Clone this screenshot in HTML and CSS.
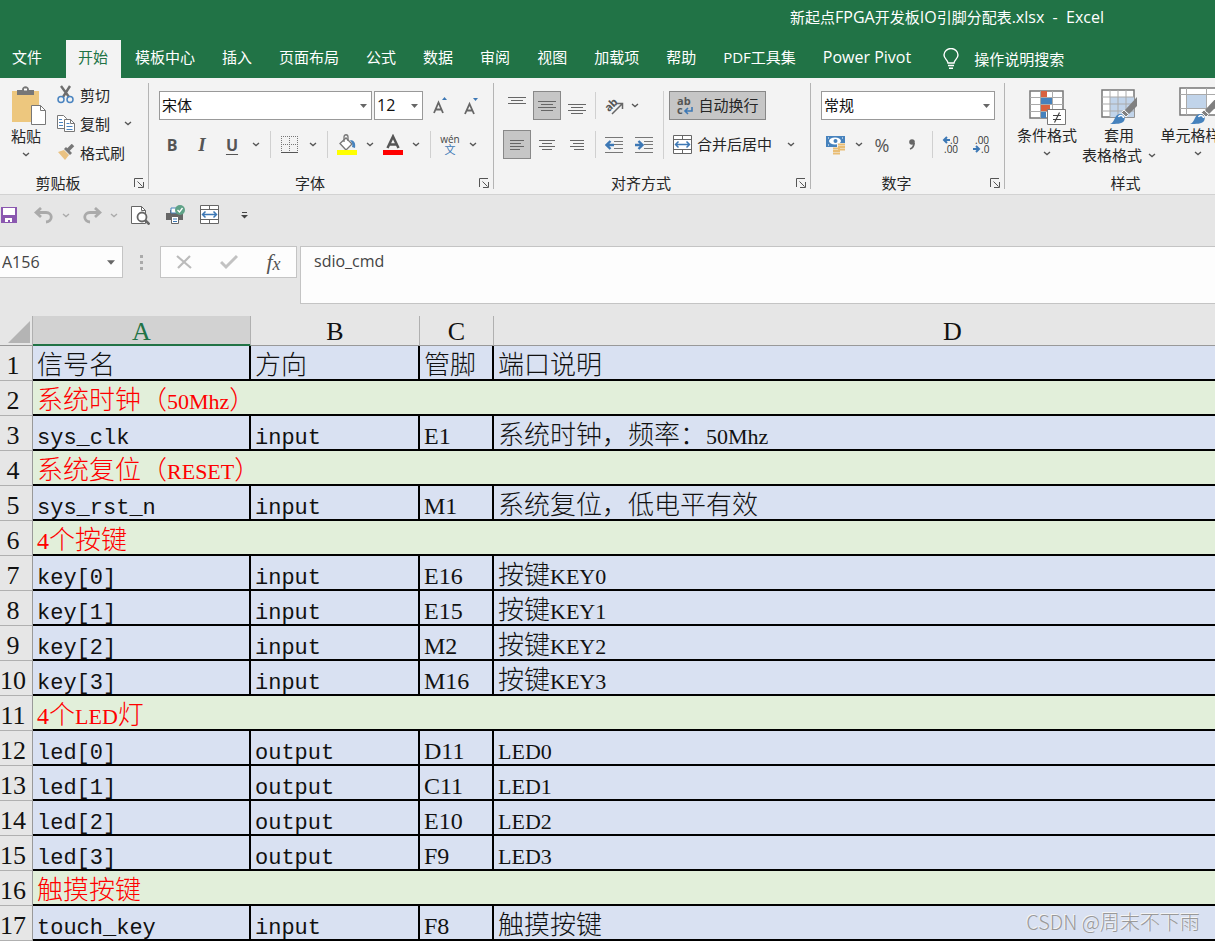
FILE: index.html
```html
<!DOCTYPE html>
<html lang="zh-CN">
<head>
<meta charset="utf-8">
<title>新起点FPGA开发板IO引脚分配表.xlsx - Excel</title>
<link rel="stylesheet" href="styles.css">
</head>
<body>
<svg class="defs" aria-hidden="true">
  <symbol id="chev" viewBox="0 0 8 5"><path d="M1 1l3 2.6L7 1" fill="none" stroke="currentColor" stroke-width="1.3"/></symbol>
  <symbol id="tri" viewBox="0 0 7 4"><path d="M0 0h7L3.500 4z" fill="currentColor"/></symbol>
  <symbol id="launch" viewBox="0 0 10 10"><path d="M.5 9V.5H9M3.500 3.500l5 5M9.500 4v5.500H4" fill="none" stroke="#555"/></symbol>
  <symbol id="merge" viewBox="0 0 20 20"><path d="M.5.5h18v18H.5zM.5 4.500h18M.5 14.500h18M9.500.5v4M9.500 14.500v4" fill="#fff" stroke="#666"/><path d="M3 9.500h13M5.500 6.500l-3 3 3 3M13.500 6.500l3 3-3 3" fill="none" stroke="#3d78b5" stroke-width="1.500"/></symbol>
  <symbol id="brush" viewBox="0 0 28 28"><path d="M27 0v9l-8 8-4-4z" fill="#808080"/><path d="M14 13l4.500 4.500-2.500 2.500-4.500-4.500z" fill="#808080" stroke="#f3f3f3"/><path d="M0 27c5-1 4-10 10-10 4 0 6 4 4 7-2 3-8 3-14 3z" fill="#4682bd"/><path d="M8.500 20c1-2 5-2 5 1" fill="none" stroke="#fff" stroke-width="1.500"/></symbol>
</svg>

<header class="titlebar">新起点<span class="en">FPGA</span>开发板<span class="en">IO</span>引脚分配表<span class="en">.xlsx&nbsp; -&nbsp; Excel</span></header>
<nav class="tabs">
  <button class="tab file">文件</button>
  <button class="tab active">开始</button>
  <button class="tab">模板中心</button>
  <button class="tab">插入</button>
  <button class="tab">页面布局</button>
  <button class="tab">公式</button>
  <button class="tab">数据</button>
  <button class="tab">审阅</button>
  <button class="tab">视图</button>
  <button class="tab">加载项</button>
  <button class="tab">帮助</button>
  <button class="tab">PDF工具集</button>
  <button class="tab en">Power Pivot</button>
  <button class="tab tell"><svg width="16" height="22" viewBox="0 0 16 22" fill="none" stroke="#fff" stroke-width="1.400"><path d="M5 15c0-3-4-4-4-8a7 6.500 0 0 1 14 0c0 4-4 5-4 8zM5 17.500h6M6 20.300h4"/></svg>操作说明搜索</button>
</nav>

<main>
<section class="ribbon">
  <div class="group clipboard">
    <div class="body">
      <button class="big paste">
        <svg width="36" height="40" viewBox="0 0 36 40"><path d="M1 5h27v31H1z" fill="#edc77e"/><path d="M6 9V4h5c0-5 7-5 7 0h5v5z" fill="#777"/><path d="M13 3.500h3" stroke="#fff" stroke-width="2"/><path d="M20.500 19.500h9l5 5v14h-14z" fill="#fff" stroke="#777"/><path d="M29.500 19.500v5h5" fill="none" stroke="#777"/></svg>
        <span>粘贴</span>
        <svg class="chev"><use href="#chev"/></svg>
      </button>
      <div class="stack">
        <button class="item"><svg width="18" height="19" viewBox="0 0 18 19"><path d="M4 1l8 11M13 1L6 12" stroke="#6e6e6e" stroke-width="2.400"/><circle cx="4" cy="14.500" r="3" fill="none" stroke="#4a84c0" stroke-width="1.500"/><circle cx="13" cy="14.500" r="3" fill="none" stroke="#4a84c0" stroke-width="1.500"/></svg>剪切</button>
        <button class="item"><svg width="18" height="19" viewBox="0 0 18 19" fill="#fff" stroke="#777"><path d="M.5 1.500h6l3 3v10h-9z"/><path d="M7.500 5.500h6l4 4v8h-10z"/><path d="M13.500 5.500v4h4" fill="none"/><path d="M2 5.500h3M2 8.500h4M2 11.500h4M9.500 9.500h3M9.500 12.500h6M9.500 15.500h6" stroke="#4a84c0"/></svg>复制<svg class="chev far"><use href="#chev"/></svg></button>
        <button class="item"><svg width="18" height="17" viewBox="0 0 18 17"><path d="M1 8l6-2 5 5-4 5z" fill="#eac282"/><path d="M7 5l2-2 6 6-2 2z" fill="#777"/><path d="M11 6l5-5" stroke="#777" stroke-width="3.500"/></svg>格式刷</button>
      </div>
    </div>
    <div class="caption"><span>剪贴板</span><button class="launch" aria-label="剪贴板设置"><svg><use href="#launch"/></svg></button></div>
  </div>

  <div class="group font">
    <div class="body rows">
      <div class="row gap">
        <label class="combo wide"><select aria-label="字体"><option>宋体</option></select><svg><use href="#tri"/></svg></label>
        <label class="combo small"><select class="en" aria-label="字号"><option>12</option></select><svg><use href="#tri"/></svg></label>
        <button class="tool" aria-label="增大字号"><svg width="16" height="18" viewBox="0 0 16 18"><path d="M2 16L6.500 5.500 11 16M3.500 12.500h6" fill="none" stroke="#666" stroke-width="1.800"/><path d="M10 3h5l-2.500-3z" fill="#3d78b5"/></svg></button>
        <button class="tool" aria-label="减小字号"><svg width="16" height="18" viewBox="0 0 16 18"><path d="M2 17L6.500 7 11 17M3.500 13.500h6" fill="none" stroke="#666" stroke-width="1.800"/><path d="M10 1h5l-2.500 3z" fill="#3d78b5"/></svg></button>
      </div>
      <div class="row fmt">
        <button class="tool bold">B</button><button class="tool ital">I</button><button class="tool under">U</button>
        <button class="drop" aria-label="下划线选项"><svg class="chev"><use href="#chev"/></svg></button><i class="sep"></i>
        <button class="tool" aria-label="边框"><svg width="18" height="18" viewBox="0 0 18 18" fill="none" stroke="#777" shape-rendering="crispEdges"><path d="M0 .5h18M0 8.500h18M.5 0v17M8.500 0v17M16.500 0v17" stroke-dasharray="1 1"/><path d="M0 16.500h17" stroke="#555"/></svg></button>
        <button class="drop" aria-label="边框选项"><svg class="chev"><use href="#chev"/></svg></button><i class="sep"></i>
        <button class="tool" aria-label="填充颜色"><svg width="22" height="22" viewBox="0 0 22 22"><path d="M4 9.500L10 4l6 6-6 6z" fill="#fff" stroke="#777" stroke-width="1.300"/><path d="M8 8V3c0-3 4-3 4 0v4" fill="none" stroke="#777" stroke-width="1.300"/><path d="M14 6c4 0 6 3 5 8l-3-1c1-3 0-4-2-7z" fill="#4682bd"/><path d="M1 16h20v5H1z" fill="#ff0"/></svg></button>
        <button class="drop" aria-label="填充选项"><svg class="chev"><use href="#chev"/></svg></button>
        <button class="tool" aria-label="字体颜色"><svg width="22" height="22" viewBox="0 0 22 22"><path d="M5.500 14L11 2.500 16.500 14M7.500 10.500h7" fill="none" stroke="#555" stroke-width="2.500"/><path d="M1 16h20v5H1z" fill="red"/></svg></button>
        <button class="drop" aria-label="颜色选项"><svg class="chev"><use href="#chev"/></svg></button><i class="sep"></i>
        <button class="tool wen"><span>wén</span><b>文</b></button>
        <button class="drop" aria-label="拼音选项"><svg class="chev"><use href="#chev"/></svg></button>
      </div>
    </div>
    <div class="caption"><span>字体</span><button class="launch" aria-label="字体设置"><svg><use href="#launch"/></svg></button></div>
  </div>

  <div class="group align">
    <div class="body split">
      <div class="rows">
        <div class="row">
          <button class="box" aria-label="顶端对齐"><svg width="18" height="18" viewBox="0 0 18 18"><path d="M0 .5h18M3 3.500h12M0 6.500h18" stroke="#666"/></svg></button>
          <button class="box on" aria-label="垂直居中"><svg width="18" height="18" viewBox="0 0 18 18"><path d="M0 4.500h18M3 7.500h12M0 10.500h18M3 13.500h12" stroke="#666"/></svg></button>
          <button class="box" aria-label="底端对齐"><svg width="18" height="18" viewBox="0 0 18 18"><path d="M0 7.500h18M3 10.500h12M0 13.500h18M3 16.500h12" stroke="#666"/></svg></button>
          <i class="sep"></i>
          <button class="tool" aria-label="方向"><svg width="20" height="20" viewBox="0 0 20 20"><text x="1" y="13" class="ab" transform="rotate(-45 7 10)">ab</text><path d="M8 18L18 8M13 7.500h5.500V13" fill="none" stroke="#666" stroke-width="1.500"/></svg></button>
          <button class="drop" aria-label="方向选项"><svg class="chev"><use href="#chev"/></svg></button>
        </div>
        <div class="row">
          <button class="box on" aria-label="左对齐"><svg width="18" height="18" viewBox="0 0 18 18"><path d="M2 4.500h14M2 7.500h11M2 10.500h14M2 13.500h10" stroke="#666"/></svg></button>
          <button class="box" aria-label="居中"><svg width="18" height="18" viewBox="0 0 18 18"><path d="M1 4.500h16M4 7.500h10M1 10.500h16M4 13.500h10" stroke="#666"/></svg></button>
          <button class="box" aria-label="右对齐"><svg width="18" height="18" viewBox="0 0 18 18"><path d="M2 4.500h14M5 7.500h11M2 10.500h14M6 13.500h10" stroke="#666"/></svg></button>
          <i class="sep"></i>
          <button class="tool" aria-label="减少缩进"><svg width="18" height="18" viewBox="0 0 18 18"><path d="M0 1.500h18M9 5.500h9M9 8.500h9M9 12.500h9M0 16.500h18" stroke="#777"/><path d="M9 9H2M5.500 5L1.500 9l4 4" fill="none" stroke="#3d78b5" stroke-width="2.400"/></svg></button>
          <button class="tool" aria-label="增加缩进"><svg width="18" height="18" viewBox="0 0 18 18"><path d="M0 1.500h18M9 5.500h9M9 8.500h9M9 12.500h9M0 16.500h18" stroke="#777"/><path d="M0 9h7M3.500 5l4 4-4 4" fill="none" stroke="#3d78b5" stroke-width="2.400"/></svg></button>
        </div>
      </div>
      <i class="vline"></i>
      <div class="rows">
        <button class="wrap"><svg width="18" height="20" viewBox="0 0 18 20"><text x="1" y="9" class="ab">ab</text><text x="1" y="18" class="ab">c</text><path d="M16 11v4H9M12 12l-3 3 3 3" fill="none" stroke="#3d78b5" stroke-width="1.600"/></svg><span>自动换行</span></button>
        <button class="mergebtn"><svg width="20" height="20"><use href="#merge"/></svg><span>合并后居中</span><svg class="chev far"><use href="#chev"/></svg></button>
      </div>
    </div>
    <div class="caption"><span>对齐方式</span><button class="launch" aria-label="对齐设置"><svg><use href="#launch"/></svg></button></div>
  </div>

  <div class="group number">
    <div class="body rows">
      <label class="combo fmtbox"><select aria-label="数字格式"><option>常规</option></select><svg><use href="#tri"/></svg></label>
      <div class="row">
        <button class="tool" aria-label="会计格式"><svg width="20" height="20" viewBox="0 0 20 20"><path d="M0 1h19v11H0z" fill="#4682bd"/><ellipse cx="9" cy="6" rx="6" ry="3.500" fill="#fff"/><circle cx="9.500" cy="6" r="2" fill="#4682bd"/><path d="M2 3h1M2 10h1M16 3h1" stroke="#fff"/><path d="M11 8h9v9h-6v3H6v-8h5z" fill="#f3f3f3"/><path d="M12 9.500h7M12 12h7M12 14.500h7M7 13.500h7M7 16h7M7 18.500h7" stroke="#e9bd74" stroke-width="1.800"/></svg></button>
        <button class="drop" aria-label="会计选项"><svg class="chev"><use href="#chev"/></svg></button>
        <button class="tool pct">%</button>
        <button class="tool" aria-label="千位分隔"><svg width="8" height="11" viewBox="0 0 8 11"><path d="M2 10c3-1 4-3 4-6" fill="none" stroke="#666" stroke-width="1.800"/><circle cx="4" cy="3" r="2.800" fill="#666"/></svg></button>
        <i class="sep"></i>
        <button class="tool" aria-label="增加小数"><svg width="20" height="20" viewBox="0 0 20 20"><text x="9" y="9" class="dec">.0</text><text x="3" y="18" class="dec">.00</text><path d="M9 5H3M6 2L3 5l3 3" fill="none" stroke="#3d78b5" stroke-width="2"/></svg></button>
        <button class="tool" aria-label="减少小数"><svg width="20" height="20" viewBox="0 0 20 20"><text x="4" y="9" class="dec">.00</text><text x="10" y="18" class="dec">.0</text><path d="M2 14h6M5 11l3 3-3 3" fill="none" stroke="#3d78b5" stroke-width="2"/></svg></button>
      </div>
    </div>
    <div class="caption"><span>数字</span><button class="launch" aria-label="数字设置"><svg><use href="#launch"/></svg></button></div>
  </div>

  <div class="group styles">
    <div class="body">
      <button class="big"><svg width="38" height="36" viewBox="0 0 38 36"><path d="M2 2h33v27H2z" fill="#fff" stroke="#777" stroke-width="1.500"/><path d="M2 8.500h33M2 15.500h33M2 22.500h33M12.500 2v27M24.500 2v27" stroke="#aaa"/><path d="M13 2h6v6h-6zM13 16h9v6h-9z" fill="#d9623f"/><path d="M13 9h11v6H13zM13 23h5v6h-5z" fill="#4682bd"/><path d="M19.500 20.500h18v15h-18z" fill="#fff" stroke="#777"/><path d="M25 26.500h8M25 30.500h8M31.500 23.500l-5 10" stroke="#444" stroke-width="1.200"/></svg><span>条件格式</span><svg class="chev"><use href="#chev"/></svg></button>
      <button class="big"><svg width="38" height="36" viewBox="0 0 38 36"><path d="M2 1h32v27H2z" fill="#fff" stroke="#777" stroke-width="1.500"/><path d="M10 8h24v20H10z" fill="#c1d4ea"/><path d="M2 8h32M2 15h32M2 22h32M10 1v27M18 1v27M26 1v27" stroke="#aaa"/><svg x="10" y="8" width="28" height="28"><use href="#brush"/></svg></svg><span>套用</span><span class="line">表格格式<svg class="chev"><use href="#chev"/></svg></span></button>
      <button class="big cellstyle"><svg width="38" height="38" viewBox="0 0 38 38"><path d="M1 1h38v27H1z" fill="#fff" stroke="#777" stroke-width="1.500"/><path d="M8 8h19v13H8z" fill="#c1d4ea"/><path d="M1 7.500h38M1 21.500h38M7.500 1v27M27.500 1v27" stroke="#aaa"/><svg x="11" y="10" width="28" height="28"><use href="#brush"/></svg></svg><span>单元格样式</span><svg class="chev"><use href="#chev"/></svg></button>
    </div>
    <div class="caption"><span>样式</span></div>
  </div>
</section>

<section class="quick">
  <button class="save" aria-label="保存"><svg width="18" height="18" viewBox="0 0 18 18"><path d="M1 1h16v16H1z" fill="#8b58b0"/><path d="M3 2h12v7H3zM5 12h7v4h-2v-2H8v2H5z" fill="#fff"/></svg></button>
  <button class="tool" aria-label="撤销"><svg width="20" height="17" viewBox="0 0 20 17"><path d="M7 1L2 5.500 7 10M2 5.500h10c7 0 7 9 0 9.500" fill="none" stroke="#aaa" stroke-width="2.800"/></svg></button>
  <button class="drop pale" aria-label="撤销列表"><svg class="chev"><use href="#chev"/></svg></button>
  <button class="tool" aria-label="恢复"><svg width="20" height="17" viewBox="0 0 20 17"><path d="M13 1l5 4.500-5 4.500M18 5.500H8c-7 0-7 9 0 9.500" fill="none" stroke="#aaa" stroke-width="2.800"/></svg></button>
  <button class="drop pale" aria-label="恢复列表"><svg class="chev"><use href="#chev"/></svg></button>
  <button class="tool" aria-label="打印预览"><svg width="20" height="20" viewBox="0 0 20 20"><path d="M1.500 1.500h10l4 4v13h-14z" fill="#fff" stroke="#666"/><path d="M11.500 1.500v4h4" fill="none" stroke="#666"/><circle cx="12" cy="12" r="4.500" fill="#fff" stroke="#666" stroke-width="1.800"/><path d="M15 15l4.500 4.500" stroke="#666" stroke-width="2.500"/></svg></button>
  <button class="tool print" aria-label="快速打印"><svg width="20" height="20" viewBox="0 0 20 20"><path d="M1 8h4V5h8v3h5v7H1z" fill="#666"/><path d="M6 3h6v5H6z" fill="#fff" stroke="#4682bd"/><path d="M6.500 11.500h7v7h-7z" fill="#fff" stroke="#666"/><path d="M8 14h4M8 16.500h4" stroke="#3d78b5"/><circle cx="15" cy="5" r="5" fill="#5fa287"/><path d="M12.500 5l2 2 3-4" fill="none" stroke="#fff" stroke-width="1.300"/></svg></button>
  <button class="tool" aria-label="合并后居中"><svg width="20" height="20"><use href="#merge"/></svg></button>
  <button class="tool more" aria-label="自定义工具栏"><svg width="7" height="8" viewBox="0 0 7 8"><path d="M1 1.500h5" stroke="#444"/><path d="M0 4h7L3.500 7.500z" fill="#444"/></svg></button>
</section>

<section class="formula">
  <label class="name"><input class="en" aria-label="名称框" value="A156"><svg><use href="#tri"/></svg></label>
  <span class="dots"><i></i><i></i><i></i></span>
  <div class="fx">
    <button aria-label="取消"><svg width="16" height="16" viewBox="0 0 16 16"><path d="M1 2l14 12M14 2L2 14" stroke="#bbb" stroke-width="2.200"/></svg></button>
    <button aria-label="输入"><svg width="18" height="16" viewBox="0 0 18 16"><path d="M1 8l5 5L17 2" fill="none" stroke="#c2c2c2" stroke-width="3"/></svg></button>
    <button class="fn"><em>f</em><em class="x">x</em></button>
  </div>
  <textarea class="en" aria-label="编辑栏">sdio_cmd</textarea>
</section>

<section class="sheet">
<table>
  <colgroup><col class="cn"><col class="ca"><col class="cb"><col class="cc"><col class="cd"></colgroup>
  <thead><tr><th class="corner"><svg width="22" height="22" viewBox="0 0 22 22"><path d="M22 0v22H0z" fill="#b4b4b4"/></svg></th><th class="sel">A</th><th>B</th><th>C</th><th>D</th></tr></thead>
  <tbody>
  <tr><th>1</th><td>信号名</td><td>方向</td><td>管脚</td><td>端口说明</td></tr>
  <tr class="sec"><th>2</th><td colspan="4">系统时钟（<span class="caps">50Mhz</span>）</td></tr>
  <tr><th>3</th><td><span class="sig">sys_clk</span></td><td><span class="sig">input</span></td><td><span class="pin">E1</span></td><td>系统时钟，频率：<span class="caps">50Mhz</span></td></tr>
  <tr class="sec"><th>4</th><td colspan="4">系统复位（<span class="caps">RESET</span>）</td></tr>
  <tr><th>5</th><td><span class="sig">sys_rst_n</span></td><td><span class="sig">input</span></td><td><span class="pin">M1</span></td><td>系统复位，低电平有效</td></tr>
  <tr class="sec"><th>6</th><td colspan="4"><span class="pin">4</span>个按键</td></tr>
  <tr><th>7</th><td><span class="sig">key[0]</span></td><td><span class="sig">input</span></td><td><span class="pin">E16</span></td><td>按键<span class="caps">KEY0</span></td></tr>
  <tr><th>8</th><td><span class="sig">key[1]</span></td><td><span class="sig">input</span></td><td><span class="pin">E15</span></td><td>按键<span class="caps">KEY1</span></td></tr>
  <tr><th>9</th><td><span class="sig">key[2]</span></td><td><span class="sig">input</span></td><td><span class="pin">M2</span></td><td>按键<span class="caps">KEY2</span></td></tr>
  <tr><th>10</th><td><span class="sig">key[3]</span></td><td><span class="sig">input</span></td><td><span class="pin">M16</span></td><td>按键<span class="caps">KEY3</span></td></tr>
  <tr class="sec"><th>11</th><td colspan="4"><span class="pin">4</span>个<span class="caps">LED</span>灯</td></tr>
  <tr><th>12</th><td><span class="sig">led[0]</span></td><td><span class="sig">output</span></td><td><span class="pin">D11</span></td><td><span class="caps">LED0</span></td></tr>
  <tr><th>13</th><td><span class="sig">led[1]</span></td><td><span class="sig">output</span></td><td><span class="pin">C11</span></td><td><span class="caps">LED1</span></td></tr>
  <tr><th>14</th><td><span class="sig">led[2]</span></td><td><span class="sig">output</span></td><td><span class="pin">E10</span></td><td><span class="caps">LED2</span></td></tr>
  <tr><th>15</th><td><span class="sig">led[3]</span></td><td><span class="sig">output</span></td><td><span class="pin">F9</span></td><td><span class="caps">LED3</span></td></tr>
  <tr class="sec"><th>16</th><td colspan="4">触摸按键</td></tr>
  <tr><th>17</th><td><span class="sig">touch_key</span></td><td><span class="sig">input</span></td><td><span class="pin">F8</span></td><td>触摸按键</td></tr>
  </tbody>
</table>
<div class="mark">CSDN @周末不下雨</div>
</section>
</main>
</body>
</html>
```
FILE: styles.css
```css
* { box-sizing: border-box; }
body { margin: 0; background: #e6e6e6; color: #262626; font: 15px/20px "Open Sans", "Noto Sans CJK SC", sans-serif; overflow-x: hidden; }
button { border: 0; padding: 0; margin: 0; background: none; color: inherit; font: inherit; display: flex; align-items: center; justify-content: center; white-space: nowrap; flex: none; }
svg { display: block; flex: none; }
.defs { position: absolute; width: 0; height: 0; }
.chev { width: 8px; height: 5px; color: #555; }
.en { font-size: 16px; }

.titlebar { height: 40px; padding: 7px 111px 0 0; text-align: right; background: #217346; color: #fff; }
.tabs { display: flex; gap: 1px; height: 38px; background: #217346; color: #fff; }
.tab { padding: 0 13px; padding-bottom: 4px; }
.tab.file { padding-left: 12px; margin-right: 10px; }
.tab.active { padding-left: 12px; background: #f3f3f3; color: #217346; }
.tab.tell { gap: 15px; padding-left: 18px; padding-bottom: 0; }

.ribbon { display: flex; height: 117px; padding: 5px 0; background: #f3f3f3; border-bottom: 1px solid #d2d2d2; overflow: hidden; }
.group { flex: none; display: flex; flex-direction: column; justify-content: space-between; border-right: 1px solid #b4b4b4; }
.clipboard { width: 149px; }
.font { width: 345px; }
.align { width: 317px; }
.number { width: 194px; }
.styles { width: 253px; border: 0; }
.body { display: flex; }
.rows { display: flex; flex-direction: column; gap: 10px; }
.body.rows, .body.split { padding-top: 8px; }
.row { display: flex; align-items: center; height: 29px; }
.caption { display: flex; align-items: center; height: 12px; line-height: 12px; padding-right: 4px; }
.caption span { flex: 1; text-align: center; padding-right: 8px; }
.clipboard .caption span { padding-right: 18px; }
.launch { width: 10px; height: 10px; }
.launch svg { width: 10px; height: 10px; }

.big { flex-direction: column; justify-content: flex-start; width: 72px; padding-top: 6px; line-height: 20px; }
.big .chev { margin-top: 6px; }
.big.paste { width: 52px; padding: 3px 0 0 2px; }
.big.paste > :first-child { margin-left: 4px; }
.paste span, .paste .chev { margin-right: 2px; }
.line { display: flex; align-items: center; gap: 6px; }
.big .line .chev { margin: 0; }
.styles .body { padding-left: 6px; }
.cellstyle { width: 90px; padding-top: 4px; margin-left: -2px; }
.stack { padding-left: 5px; }
.item { height: 29px; justify-content: flex-start; gap: 5px; padding-bottom: 6px; }
.far { margin-left: 11px; }
.item .far { margin-left: 9px; }

.combo { position: relative; display: block; height: 29px; }
.combo select { appearance: none; display: block; width: 100%; height: 100%; padding: 0 2px 2px; border: 1px solid #999; border-radius: 0; background: #fff; color: #111; font: inherit; }
.combo select.en { font-size: 16px; }
.combo svg, .name svg { position: absolute; right: 5px; top: 13px; width: 7px; height: 4px; color: #666; pointer-events: none; }
.font .body { padding-left: 8px; }
.row.gap { padding-left: 2px; gap: 2px; }
.wide { width: 213px; }
.small { width: 49px; }
.tool { width: 28px; height: 29px; }
.row.gap .tool { margin-left: 1px; }
.drop { width: 18px; height: 29px; }
.sep { width: 1px; height: 27px; margin: 0 5px; background: #d0d0d0; }
.bold, .ital, .under { width: 30px; color: #555; font-weight: 700; font-size: 16px; }
.ital { font-family: "Liberation Serif", serif; font-style: italic; font-size: 19px; }
.under { text-decoration: underline; text-underline-offset: 3px; }
.wen { flex-direction: column; font-size: 10px; line-height: 8px; color: #444; gap: 3px; }
.wen b { color: #3d78b5; font-weight: 400; font-size: 11px; }

.split { padding-left: 9px; }
.box { width: 28px; height: 29px; margin-right: 2px; }
.box.on, .wrap { background: #c6c6c6; border: 1px solid #888; }
.split .sep { margin: 0 3px 0 2px; }
.split .row .tool { width: 30px; }
.split .row .drop { width: 12px; }
.vline { width: 1px; height: 68px; margin: 0 5px 0 4px; background: #d0d0d0; }
.wrap { width: 97px; height: 29px; gap: 4px; }
.wrap span, .mergebtn span { padding-bottom: 2px; }
.mergebtn { height: 29px; padding-left: 4px; gap: 4px; justify-content: flex-start; }
.ab { font: 700 11px "Open Sans", sans-serif; fill: #555; }
.dec { font: 10px "Open Sans", sans-serif; fill: #333; }
.number .body { padding-left: 10px; }
.number .tool { width: 30px; }
.number .drop { width: 16px; }
.number .sep { margin: 0 3px 0 5px; }
.fmtbox { width: 174px; }
.pct { font-size: 18px; color: #555; }

.quick { display: flex; align-items: center; height: 40px; }
.save { width: 18px; margin-right: 12px; }
.quick .drop { width: 16px; margin-right: 4px; }
.pale .chev { color: #aaa; }
.print { margin: 0 7px; }
.more { margin-left: 6px; }

.formula { display: flex; align-items: flex-start; padding: 11px 0 12px; }
.name { position: relative; width: 123px; height: 32px; }
.name input { display: block; width: 100%; height: 100%; border: 1px solid #c4c4c4; border-left: 0; background: #fdfdfd; padding: 0 2px 1px; font-family: inherit; color: #444; }
.name svg { width: 8px; height: 5px; top: 14px; right: 8px; }
.dots { width: 37px; height: 32px; display: flex; flex-direction: column; align-items: center; justify-content: center; gap: 3px; }
.dots i { width: 3px; height: 3px; background: #aaa; }
.fx { display: flex; width: 137px; height: 32px; border: 1px solid #c4c4c4; background: #fdfdfd; margin-right: 3px; }
.fx button { width: 45px; }
.fx .fn { color: #555; font: 22px/24px "Liberation Serif", serif; }
.fn .x { font-size: 18px; padding-top: 4px; }
.formula textarea { flex: 1; min-width: 0; height: 58px; padding: 4px 13px; border: 1px solid #c4c4c4; border-right: 0; background: #fdfdfd; font-family: inherit; line-height: 20px; color: #444; resize: none; border-radius: 0; display: block; }

.sheet { position: relative; overflow: hidden; }
table { width: 1412px; table-layout: fixed; border-collapse: separate; border-spacing: 0; color: #111; }
.cn { width: 33px; }
.ca { width: 218px; }
.cb { width: 169px; }
.cc { width: 74px; }
.cd { width: 918px; }
th { font: 26px/26px "Liberation Serif", serif; background: #e6e6e6; border-right: 1px solid #b0b0b0; border-bottom: 1px solid #999; white-space: nowrap; }
thead th { height: 30px; padding: 3px 0 0; }
thead th.sel { background: #d2d2d2; color: #217346; border-bottom-color: #217346; box-shadow: inset 0 -1px #217346; }
.corner svg { margin-left: 8px; }
tbody th { height: 35px; padding: 4px 6px 0 0; border-right-color: #999; border-bottom-color: #b0b0b0; vertical-align: baseline; }
td { height: 35px; padding: 4px 4px 0; background: #d9e1f2; border-right: 2px solid #000; border-bottom: 2px solid #000; white-space: nowrap; vertical-align: baseline; font: 300 26px/26px "Noto Sans CJK SC", sans-serif; }
.sec td { background: #e2efda; color: #f00; }
.sig { font: 22px/20px "Liberation Mono", monospace; }
.pin { font: 24px/20px "Liberation Serif", serif; }
.caps { font: 22px/20px "Liberation Serif", serif; }
.mark { position: absolute; right: 15px; bottom: 5px; font: 300 20px/28px "Noto Sans CJK SC", sans-serif; color: #999; text-shadow: -1px -1px #f4f4f4; }
```
